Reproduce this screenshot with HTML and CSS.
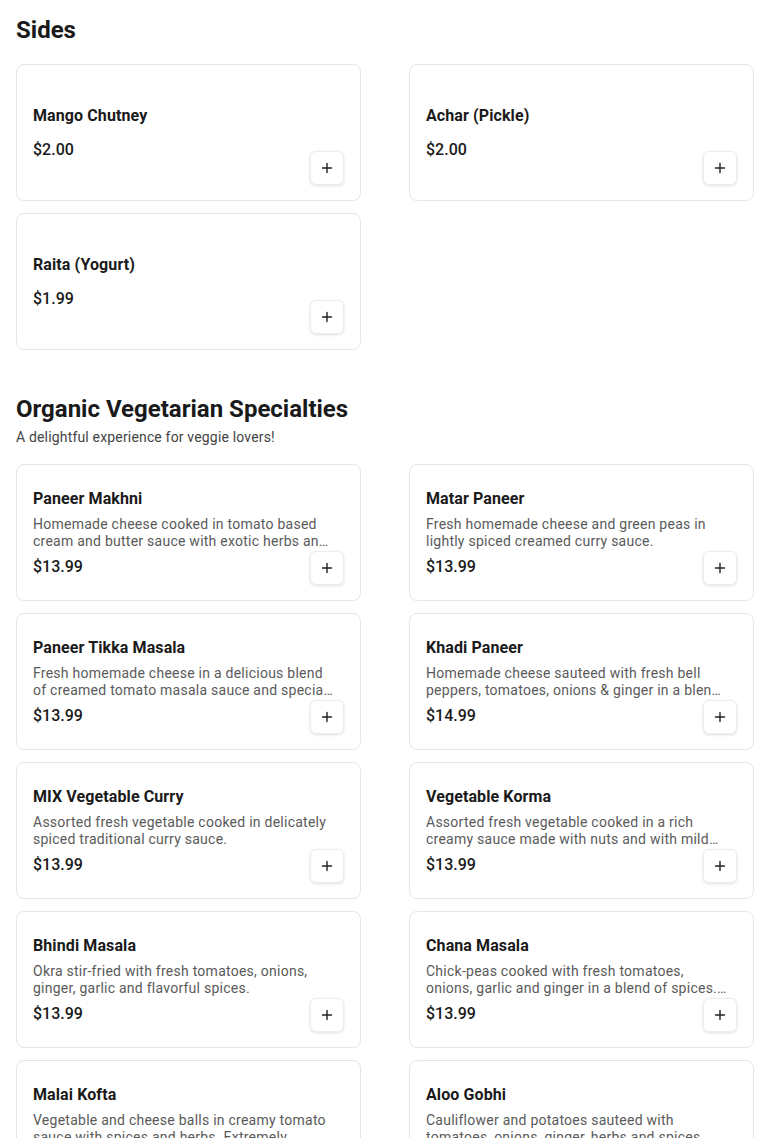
FILE: index.html
```html
<!DOCTYPE html>
<html lang="en">
<head>
<meta charset="utf-8">
<title>Menu</title>
<link rel="stylesheet" href="styles.css">
</head>
<body>
<main class="menu">
  <section class="section">
    <header class="section-head">
      <h2 class="section-title">Sides</h2>
    </header>
    <div class="grid">
      <article class="card">
        <h3 class="item-name">Mango Chutney</h3>
        <div class="item-price item-price--solo">$2.00</div>
        <button class="add-btn" aria-label="Add"><svg viewBox="0 0 12 12" width="12" height="12"><path d="M6 1.5v9M1.5 6h9"/></svg></button>
      </article>
      <article class="card">
        <h3 class="item-name">Achar (Pickle)</h3>
        <div class="item-price item-price--solo">$2.00</div>
        <button class="add-btn" aria-label="Add"><svg viewBox="0 0 12 12" width="12" height="12"><path d="M6 1.5v9M1.5 6h9"/></svg></button>
      </article>
      <article class="card">
        <h3 class="item-name">Raita (Yogurt)</h3>
        <div class="item-price item-price--solo">$1.99</div>
        <button class="add-btn" aria-label="Add"><svg viewBox="0 0 12 12" width="12" height="12"><path d="M6 1.5v9M1.5 6h9"/></svg></button>
      </article>
    </div>
  </section>

  <section class="section">
    <header class="section-head">
      <h2 class="section-title">Organic Vegetarian Specialties</h2>
      <p class="section-sub">A delightful experience for veggie lovers!</p>
    </header>
    <div class="grid">
      <article class="card">
        <h3 class="item-name">Paneer Makhni</h3>
        <p class="item-desc">Homemade cheese cooked in tomato based cream and butter sauce with exotic herbs and spices.</p>
        <div class="item-price">$13.99</div>
        <button class="add-btn" aria-label="Add"><svg viewBox="0 0 12 12" width="12" height="12"><path d="M6 1.5v9M1.5 6h9"/></svg></button>
      </article>
      <article class="card">
        <h3 class="item-name">Matar Paneer</h3>
        <p class="item-desc">Fresh homemade cheese and green peas in lightly spiced creamed curry sauce.</p>
        <div class="item-price">$13.99</div>
        <button class="add-btn" aria-label="Add"><svg viewBox="0 0 12 12" width="12" height="12"><path d="M6 1.5v9M1.5 6h9"/></svg></button>
      </article>
      <article class="card">
        <h3 class="item-name">Paneer Tikka Masala</h3>
        <p class="item-desc">Fresh homemade cheese in a delicious blend of creamed tomato masala sauce and special spices.</p>
        <div class="item-price">$13.99</div>
        <button class="add-btn" aria-label="Add"><svg viewBox="0 0 12 12" width="12" height="12"><path d="M6 1.5v9M1.5 6h9"/></svg></button>
      </article>
      <article class="card">
        <h3 class="item-name">Khadi Paneer</h3>
        <p class="item-desc">Homemade cheese sauteed with fresh bell peppers, tomatoes, onions &amp; ginger in a blend of spices.</p>
        <div class="item-price">$14.99</div>
        <button class="add-btn" aria-label="Add"><svg viewBox="0 0 12 12" width="12" height="12"><path d="M6 1.5v9M1.5 6h9"/></svg></button>
      </article>
      <article class="card">
        <h3 class="item-name">MIX Vegetable Curry</h3>
        <p class="item-desc">Assorted fresh vegetable cooked in delicately spiced traditional curry sauce.</p>
        <div class="item-price">$13.99</div>
        <button class="add-btn" aria-label="Add"><svg viewBox="0 0 12 12" width="12" height="12"><path d="M6 1.5v9M1.5 6h9"/></svg></button>
      </article>
      <article class="card">
        <h3 class="item-name">Vegetable Korma</h3>
        <p class="item-desc">Assorted fresh vegetable cooked in a rich creamy sauce made with nuts and with mild spices.</p>
        <div class="item-price">$13.99</div>
        <button class="add-btn" aria-label="Add"><svg viewBox="0 0 12 12" width="12" height="12"><path d="M6 1.5v9M1.5 6h9"/></svg></button>
      </article>
      <article class="card">
        <h3 class="item-name">Bhindi Masala</h3>
        <p class="item-desc">Okra stir-fried with fresh tomatoes, onions, ginger, garlic and flavorful spices.</p>
        <div class="item-price">$13.99</div>
        <button class="add-btn" aria-label="Add"><svg viewBox="0 0 12 12" width="12" height="12"><path d="M6 1.5v9M1.5 6h9"/></svg></button>
      </article>
      <article class="card">
        <h3 class="item-name">Chana Masala</h3>
        <p class="item-desc">Chick-peas cooked with fresh tomatoes, onions, garlic and ginger in a blend of spices. Vegan.</p>
        <div class="item-price">$13.99</div>
        <button class="add-btn" aria-label="Add"><svg viewBox="0 0 12 12" width="12" height="12"><path d="M6 1.5v9M1.5 6h9"/></svg></button>
      </article>
      <article class="card">
        <h3 class="item-name">Malai Kofta</h3>
        <p class="item-desc">Vegetable and cheese balls in creamy tomato sauce with spices and herbs. Extremely delicious.</p>
        <div class="item-price">$14.99</div>
        <button class="add-btn" aria-label="Add"><svg viewBox="0 0 12 12" width="12" height="12"><path d="M6 1.5v9M1.5 6h9"/></svg></button>
      </article>
      <article class="card">
        <h3 class="item-name">Aloo Gobhi</h3>
        <p class="item-desc">Cauliflower and potatoes sauteed with tomatoes, onions, ginger, herbs and spices.</p>
        <div class="item-price">$13.99</div>
        <button class="add-btn" aria-label="Add"><svg viewBox="0 0 12 12" width="12" height="12"><path d="M6 1.5v9M1.5 6h9"/></svg></button>
      </article>
    </div>
  </section>
</main>
</body>
</html>
```

FILE: styles.css
```css
* { box-sizing: border-box; }

html, body {
  margin: 0;
  background: #ffffff;
}

body {
  font-family: Roboto, "Liberation Sans", Arial, sans-serif;
  color: #1a1a1a;
}

.menu {
  padding: 16px;
}

.section {
  margin-bottom: 45px;
}

.section-head {
  padding-bottom: 16px;
}

.section-title {
  margin: 0 0 4px;
  font-size: 24px;
  line-height: 28px;
  font-weight: 700;
  color: #1a1a1a;
}

.section-sub {
  margin: 0;
  font-size: 14px;
  line-height: 21px;
  letter-spacing: 0.17px;
  color: #444444;
}

.grid {
  display: grid;
  grid-template-columns: 1fr 1fr;
  column-gap: 48px;
  row-gap: 12px;
}

.card {
  position: relative;
  height: 137px;
  display: flex;
  flex-direction: column;
  justify-content: center;
  padding: 16px 24px 16px 16px;
  border: 1px solid #e6e6e6;
  border-radius: 8px;
  background: #fff;
}

.item-name {
  margin: 0 0 5px;
  font-size: 16px;
  line-height: 24px;
  font-weight: 700;
  letter-spacing: 0.1px;
  color: #1a1a1a;
}

.item-desc {
  margin: 0 0 5px;
  font-size: 14px;
  line-height: 17px;
  letter-spacing: 0.25px;
  color: #5a5a5a;
  display: -webkit-box;
  -webkit-box-orient: vertical;
  -webkit-line-clamp: 2;
  overflow: hidden;
}

.item-price {
  font-size: 16px;
  line-height: 24px;
  font-weight: 500;
  color: #1a1a1a;
}

.item-price--solo {
  margin-top: 5px;
}

.add-btn {
  position: absolute;
  right: 16px;
  bottom: 15px;
  width: 34px;
  height: 34px;
  padding: 0;
  display: flex;
  align-items: center;
  justify-content: center;
  background: #ffffff;
  border: 1px solid #ededed;
  border-radius: 6px;
  box-shadow: 0 1px 3px rgba(0, 0, 0, 0.12);
  cursor: pointer;
}

.add-btn svg {
  display: block;
  fill: none;
  stroke: #222222;
  stroke-width: 1.4;
  stroke-linecap: round;
}
```
